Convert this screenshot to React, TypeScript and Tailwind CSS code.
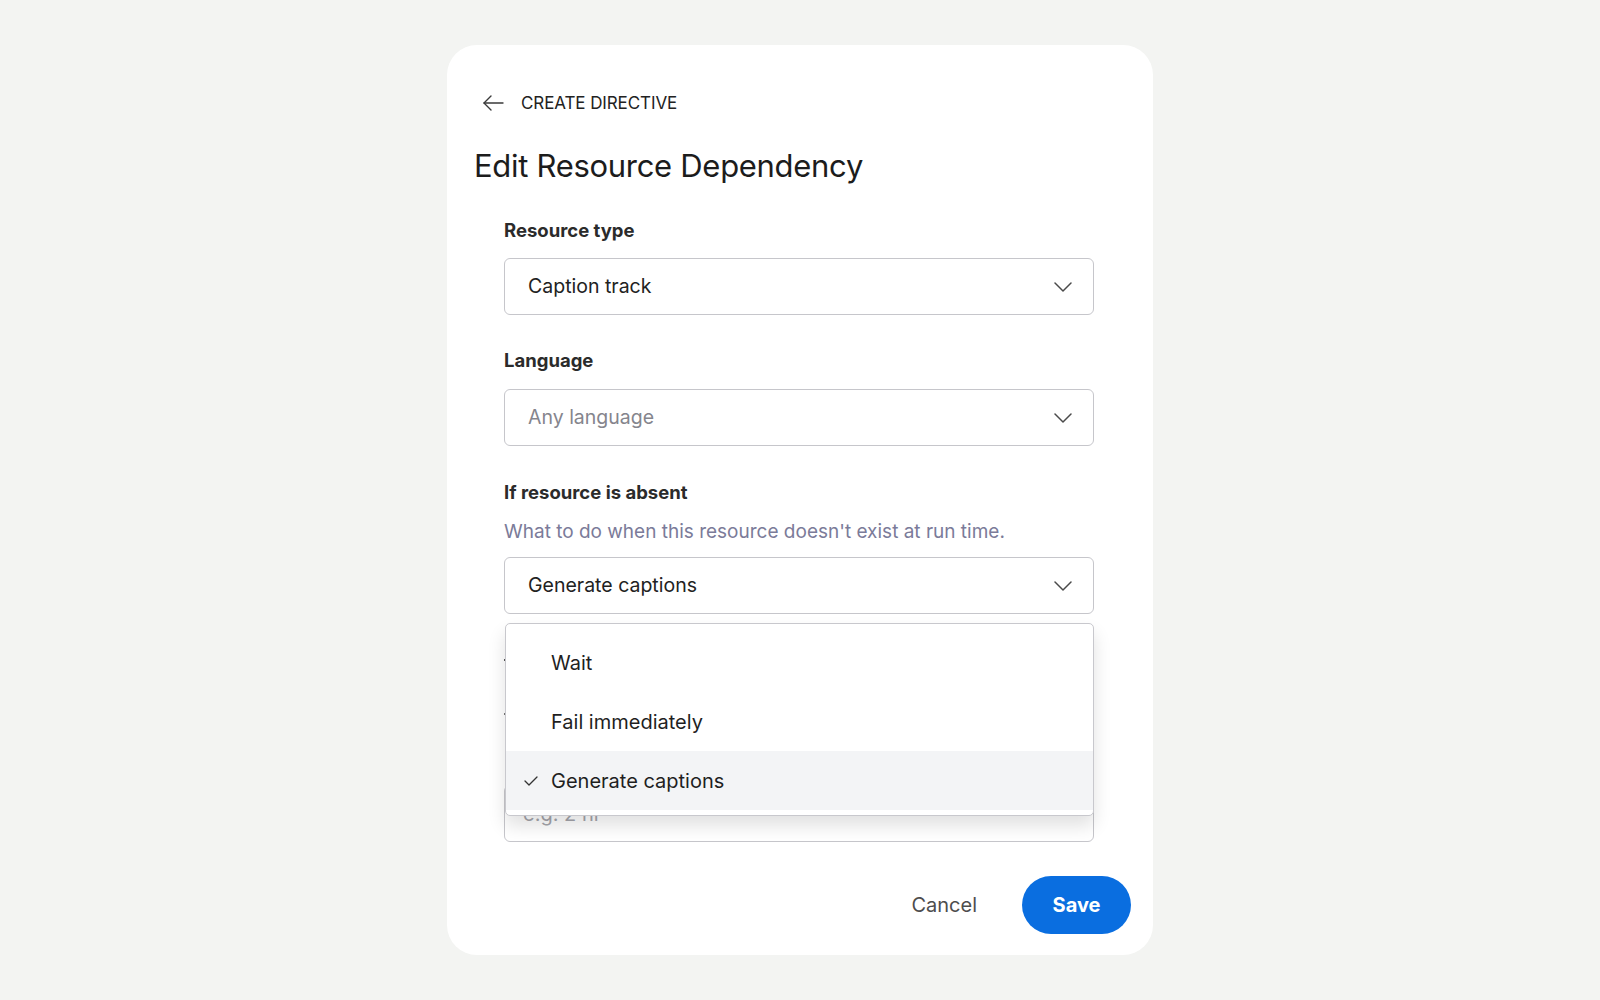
import React from "react";

function Chevron() {
  return (
    <svg width="18" height="10" viewBox="0 0 18 10" fill="none" className="shrink-0">
      <polyline points="1,1 9,9 17,1" stroke="#4a4a4a" strokeWidth="1.5" strokeLinecap="round" strokeLinejoin="round" />
    </svg>
  );
}

function BackArrow() {
  return (
    <svg width="22" height="18" viewBox="0 0 22 18" fill="none" className="shrink-0">
      <line x1="2" y1="9" x2="21" y2="9" stroke="#3a3a3a" strokeWidth="1.4" strokeLinecap="round" />
      <polyline points="9,2 2,9 9,16" stroke="#3a3a3a" strokeWidth="1.4" strokeLinecap="round" strokeLinejoin="round" />
    </svg>
  );
}

function Check() {
  return (
    <svg width="14" height="10" viewBox="0 0 14 10" fill="none" className="shrink-0">
      <polyline points="1,5 5,9 13,1" stroke="#333" strokeWidth="1.3" strokeLinecap="round" strokeLinejoin="round" />
    </svg>
  );
}

function Select({ value, placeholder }: { value: string; placeholder?: boolean }) {
  return (
    <div className="flex h-[57px] w-full items-center justify-between rounded-[6px] border-[1.5px] border-[#c6c6cb] bg-white pl-[23px] pr-[21px]">
      <span className={placeholder ? "text-[19.5px] text-[#85858d]" : "text-[19.5px] text-[#222]"}>{value}</span>
      <Chevron />
    </div>
  );
}

function Label({ children }: { children: React.ReactNode }) {
  return <div className="text-[18.5px] font-bold leading-[24px] text-[#2b2b2b]">{children}</div>;
}

const options = ["Wait", "Fail immediately", "Generate captions"];
const selected = "Generate captions";

export default function App() {
  return (
    <div
      className="flex min-h-screen w-full justify-center bg-[#f3f4f2] pt-[45px]"
      style={{ fontFamily: "Inter, 'Noto Sans', 'Liberation Sans', sans-serif" }}
    >
      <div className="flex h-[910px] w-[706px] flex-col rounded-[30px] bg-white">
        <div className="flex items-center gap-[17px] pl-[35px] pt-[46px]">
          <BackArrow />
          <span className="text-[17px] leading-[24px] tracking-[-0.1px] text-[#222]">CREATE DIRECTIVE</span>
        </div>

        <h1 className="ml-[27px] mt-[33px] text-[31px] font-normal leading-[36px] tracking-[-0.3px] text-[#1c1c1c]">
          Edit Resource Dependency
        </h1>

        <div className="ml-[57px] mt-[34px] flex w-[590px] flex-col">
          <Label>Resource type</Label>
          <div className="mt-[16px]">
            <Select value="Caption track" />
          </div>

          <div className="mt-[33px]">
            <Label>Language</Label>
          </div>
          <div className="mt-[17px]">
            <Select value="Any language" placeholder />
          </div>

          <div className="mt-[34px]">
            <Label>If resource is absent</Label>
          </div>
          <div className="mt-[16px] text-[19px] leading-[24px] text-[#7b7b99]">
            What to do when this resource doesn't exist at run time.
          </div>

          <div className="relative mt-[13px]">
            <Select value="Generate captions" />

            {/* field underneath the open menu; only its left edge peeks out */}
            <div className="mt-[45px] h-[2px] w-[2px] bg-[#555]" />
            <div className="mt-[52px] h-[2px] w-[2px] bg-[#777]" />
            <div className="mt-[70px] flex h-[57px] items-center rounded-[6px] border-[1.5px] border-[#c6c6cb] bg-white pl-[18px]">
              <span className="text-[20px] text-[#a5a5ab]">e.g. 2 hr</span>
            </div>

            {/* open options menu */}
            <div className="absolute left-[1px] right-0 top-[66px] rounded-[5px] border-[1.5px] border-[#c8c8cd] bg-white pb-[5px] pt-[9px] shadow-[0_10px_18px_rgba(0,0,0,0.12)]">
              {options.map((opt) => {
                const active = opt === selected;
                return (
                  <div
                    key={opt}
                    className={
                      active
                        ? "flex h-[59px] items-center bg-[#f3f4f6] pl-[18px]"
                        : "flex h-[59px] items-center pl-[18px]"
                    }
                  >
                    <div className="flex w-[27px] items-center">{active ? <Check /> : null}</div>
                    <span className="text-[20px] text-[#1f1f1f]">{opt}</span>
                  </div>
                );
              })}
            </div>
          </div>
        </div>

        <div className="mt-auto flex items-center justify-end gap-[23px] pb-[21px] pr-[22px]">
          <button className="px-[22px] text-[20px] text-[#4d4d4d]">Cancel</button>
          <button className="h-[58px] w-[109px] rounded-full bg-[#0a6ee0] text-[20px] font-bold text-white">
            Save
          </button>
        </div>
      </div>
    </div>
  );
}
